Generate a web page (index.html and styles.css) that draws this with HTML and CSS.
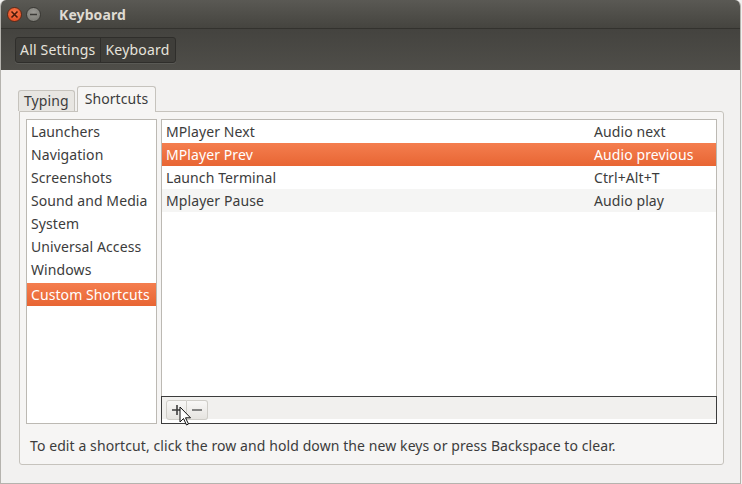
FILE: index.html
```html
<!DOCTYPE html>
<html lang="en">
<head>
  <meta charset="UTF-8">
  <title>Keyboard</title>
  <link rel="stylesheet" href="styles.css">
</head>
<body>
  <div class="window">
    <div class="titlebar">
      <span class="wbtn close">
        <svg width="9" height="9" viewBox="0 0 9 9"><path d="M1.5 1.5 L7.5 7.5 M7.5 1.5 L1.5 7.5" stroke="#4a1a0a" stroke-width="1.6"/></svg>
      </span>
      <span class="wbtn minimize">
        <svg width="9" height="9" viewBox="0 0 9 9"><path d="M1 4.5 H8" stroke="#3c3b37" stroke-width="1.6"/></svg>
      </span>
      <span class="title">Keyboard</span>
    </div>

    <div class="toolbar">
      <div class="crumbs">
        <span class="crumb">All Settings</span>
        <span class="crumb">Keyboard</span>
      </div>
    </div>

    <div class="content">
      <div class="tabs">
        <span class="tab">Typing</span>
        <span class="tab active">Shortcuts</span>
      </div>

      <div class="panel">
        <div class="lists">
          <ul class="categories">
            <li>Launchers</li>
            <li>Navigation</li>
            <li>Screenshots</li>
            <li>Sound and Media</li>
            <li>System</li>
            <li>Universal Access</li>
            <li>Windows</li>
            <li class="sep selected">Custom Shortcuts</li>
          </ul>

          <div class="shortcuts">
            <div class="rows">
              <div class="row"><span>MPlayer Next</span><span class="accel">Audio next</span></div>
              <div class="row selected"><span>MPlayer Prev</span><span class="accel">Audio previous</span></div>
              <div class="row"><span>Launch Terminal</span><span class="accel">Ctrl+Alt+T</span></div>
              <div class="row odd"><span>Mplayer Pause</span><span class="accel">Audio play</span></div>
            </div>
            <div class="list-tools">
              <span class="tool">
                <svg width="12" height="12" viewBox="0 0 12 12"><path d="M6 1 V11 M1 6 H11" stroke="#3c3c3c" stroke-width="1.6"/></svg>
              </span>
              <span class="tool">
                <svg width="12" height="12" viewBox="0 0 12 12"><path d="M1 6 H11" stroke="#6a6a6a" stroke-width="1.6"/></svg>
              </span>
              <!-- mouse pointer over the add button -->
              <svg class="pointer" width="13" height="20" viewBox="0 0 13 20">
                <path d="M1 1 V16 L4.5 12.5 L7.5 19 L9.5 18 L6.5 11.8 L11.5 11.8 Z" fill="#fff" stroke="#111" stroke-width="1" stroke-linejoin="round"/>
              </svg>
            </div>
          </div>
        </div>

        <p class="hint">To edit a shortcut, click the row and hold down the new keys or press Backspace to clear.</p>
      </div>
    </div>
  </div>
</body>
</html>
```

FILE: styles.css
```css
* {
  box-sizing: border-box;
}

body {
  margin: 0;
  width: 742px;
  height: 484px;
  overflow: hidden;
  font-family: "Noto Sans", "DejaVu Sans", sans-serif;
  font-size: 14px;
  letter-spacing: 0.09px;
  color: #3c3c3c;
  background: #f2f1f0;
}

.window {
  width: 741px;
  height: 484px;
  border: 1px solid #b5b3ae;
  border-top: none;
  border-radius: 6px 6px 0 0;
  overflow: hidden;
  display: flex;
  flex-direction: column;
}

/* window decoration */
.titlebar {
  height: 29px;
  display: flex;
  align-items: center;
  padding-left: 6px;
  background: linear-gradient(#5a5954, #45443f);
  border-bottom: 1px solid #33322e;
}

.wbtn {
  width: 15px;
  height: 15px;
  border-radius: 50%;
  display: flex;
  align-items: center;
  justify-content: center;
  margin-right: 4px;
}

.wbtn.close {
  background: radial-gradient(circle at 50% 35%, #f9784a, #e1451c);
  border: 1px solid #5c2a18;
}

.wbtn.minimize {
  background: radial-gradient(circle at 50% 35%, #9b9a95, #77766f);
  border: 1px solid #3a3935;
}

.title {
  margin-left: 14px;
  color: #dfdbd2;
  font-weight: bold;
  font-size: 14px;
}

.toolbar {
  height: 41px;
  display: flex;
  align-items: center;
  padding-left: 14px;
  background: linear-gradient(#44433f, #4f4e49);
}

.crumbs {
  display: flex;
  border: 1px solid #2f2e2b;
  border-radius: 3px;
  background: #3f3e3a;
  box-shadow: 0 1px 0 rgba(255, 255, 255, 0.08);
}

.crumb {
  height: 24px;
  line-height: 23px;
  padding: 0 5px 0 4px;
  color: #e6e3dc;
  font-size: 14px;
  letter-spacing: 0.2px;
}

.crumb + .crumb {
  border-left: 1px solid #2f2e2b;
}

/* dialog body */
.content {
  flex: 1;
  padding: 16px 16px 18px 18px;
  display: flex;
  flex-direction: column;
}

.tabs {
  display: flex;
  align-items: flex-end;
  gap: 2px;
  height: 25px;
  margin-left: -1px;
  position: relative;
  z-index: 1;
}

.tab {
  height: 21px;
  line-height: 20px;
  padding: 0 5px;
  border: 1px solid #c6c3bd;
  border-bottom: none;
  border-radius: 3px 3px 0 0;
  background: #e8e6e2;
}

.tab.active {
  height: 26px;
  line-height: 24px;
  padding: 0 7px;
  background: #f6f5f4;
  margin-bottom: -1px;
}

.panel {
  flex: 1;
  border: 1px solid #c6c3bd;
  border-radius: 0 3px 3px 3px;
  background: #f6f5f4;
  padding: 7px 6px 0 6px;
  display: flex;
  flex-direction: column;
}

.lists {
  display: flex;
  gap: 4px;
  height: 305px;
}

.categories {
  list-style: none;
  margin: 0;
  padding: 0;
  width: 131px;
  background: #fff;
  border: 1px solid #bcb9b3;
}

.categories li {
  height: 23px;
  line-height: 23px;
  padding-left: 4px;
  white-space: nowrap;
}

.categories li.sep {
  margin-top: 2px;
}

.selected {
  background: linear-gradient(#f47e4f, #e86533);
  color: #fff;
}

.shortcuts {
  flex: 1;
  display: flex;
  flex-direction: column;
  border: 1px solid #bcb9b3;
  border-bottom: none;
  background: #fff;
}

.rows {
  flex: 1;
}

.row {
  height: 23px;
  line-height: 23px;
  display: flex;
  padding-left: 4px;
}

.row span:first-child {
  width: 428px;
}

.row.odd {
  background: #f5f5f4;
}

.list-tools {
  position: relative;
  height: 28px;
  margin: 0 -1px;
  border: 1px solid #3c3c3c;
  background: linear-gradient(#f1f0ee, #f1f0ee 22px, #fff 22px);
  display: flex;
  align-items: flex-start;
  padding: 3px 0 0 4px;
}

.tool {
  width: 21px;
  height: 20px;
  display: flex;
  align-items: center;
  justify-content: center;
  border: 1px solid #cfcdc8;
  background: linear-gradient(#f8f7f6, #e6e4e0);
}

.tool:first-child {
  border-radius: 3px 0 0 3px;
}

.tool + .tool {
  border-left: none;
  border-radius: 0 3px 3px 0;
}

.pointer {
  position: absolute;
  left: 17px;
  top: 9px;
}

.hint {
  margin: 12px 0 0 4px;
  white-space: nowrap;
}
```
